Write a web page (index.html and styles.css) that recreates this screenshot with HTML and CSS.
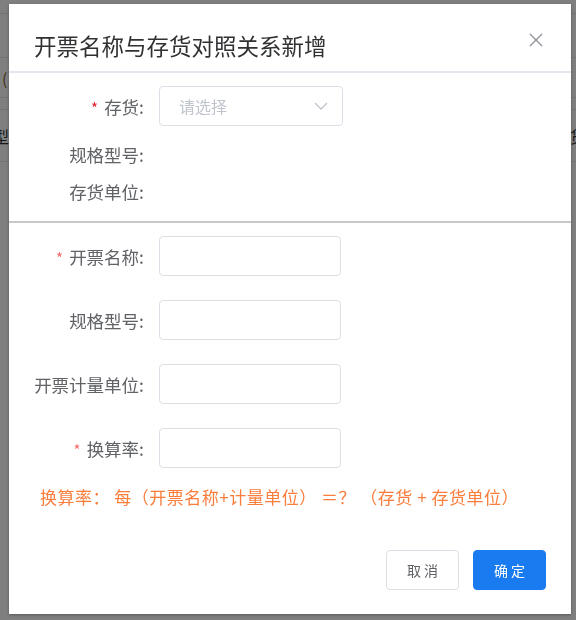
FILE: index.html
```html
<!DOCTYPE html>
<html lang="zh-CN">
<head>
    <meta charset="UTF-8">
    <title>开票名称与存货对照关系新增</title>
    <link rel="stylesheet" href="styles.css">
</head>
<body>

    <!-- страница под маской -->
    <div class="page">
        <div class="page-row h13"></div>
        <div class="page-row h44"></div>
        <div class="page-row h40"><span class="cell-left link">(</span></div>
        <div class="page-row h12"></div>
        <div class="page-row h52"><span class="cell-left">型</span><span class="cell-right">货</span></div>
    </div>

    <div class="mask">
        <div class="dialog">
            <div class="dialog-header">
                <span class="dialog-title">开票名称与存货对照关系新增</span>
                <button class="dialog-close" aria-label="关闭">
                    <svg width="14" height="14" viewBox="0 0 14 14">
                        <path d="M1 1L13 13M13 1L1 13" stroke="#909399" stroke-width="1.4" fill="none"/>
                    </svg>
                </button>
            </div>

            <div class="form-section section-top">
                <div class="form-item">
                    <label class="form-label"><i class="req dark">*</i>存货:</label>
                    <div class="select">
                        <span class="placeholder">请选择</span>
                        <svg class="arrow" width="14" height="8" viewBox="0 0 14 8">
                            <path d="M1 1L7 7L13 1" stroke="#c0c4cc" stroke-width="1.3" fill="none"/>
                        </svg>
                    </div>
                </div>
                <div class="form-item plain first-plain"><label class="form-label">规格型号:</label></div>
                <div class="form-item plain"><label class="form-label">存货单位:</label></div>
            </div>

            <div class="form-section section-bottom">
                <div class="form-item spaced">
                    <label class="form-label"><i class="req">*</i>开票名称:</label>
                    <input class="input" type="text">
                </div>
                <div class="form-item spaced">
                    <label class="form-label">规格型号:</label>
                    <input class="input" type="text">
                </div>
                <div class="form-item spaced">
                    <label class="form-label">开票计量单位:</label>
                    <input class="input" type="text">
                </div>
                <div class="form-item">
                    <label class="form-label"><i class="req">*</i>换算率:</label>
                    <input class="input" type="text">
                </div>
                <p class="tip">换算率： 每（开票名称+计量单位）&nbsp;＝？ （存货 + 存货单位）</p>
            </div>

            <div class="dialog-footer">
                <button class="btn">取 消</button>
                <button class="btn primary">确 定</button>
            </div>
        </div>
    </div>

</body>
</html>
```

FILE: styles.css
```css
html, body {
    margin: 0;
    padding: 0;
    height: 100%;
    width: 100%;
    overflow: hidden;
    font-family: "Noto Sans CJK SC", "Noto Sans", sans-serif;
    background-color: #fff;
}

.page {
    width: 100%;
}

.page-row {
    border-bottom: 1px solid #e6e6e6;
    display: flex;
    justify-content: space-between;
    align-items: center;
    font-size: 16px;
    color: #333;
    box-sizing: border-box;
}

.h13 { height: 14px; }
.h44 { height: 44px; }
.h40 { height: 40px; }
.h12 { height: 12px; }
.h52 { height: 52px; }

.cell-left {
    margin-left: -7px;
}

.cell-left.link {
    margin-left: 2px;
    color: #8a6a3a;
}

.cell-right {
    margin-right: -10px;
}

.mask {
    position: fixed;
    top: 0;
    left: 0;
    right: 0;
    bottom: 0;
    background: rgba(0, 0, 0, 0.5);
    padding: 4px 0 0 9px;
}

.dialog {
    width: 562px;
    height: 610px;
    background: #fff;
    box-shadow: 0 1px 3px rgba(0, 0, 0, 0.3);
    display: flex;
    flex-direction: column;
    box-sizing: border-box;
}

.dialog-header {
    height: 69px;
    box-sizing: border-box;
    padding: 28px 28px 0 25px;
    border-bottom: 2px solid #e4e7ed;
    display: flex;
    justify-content: space-between;
    align-items: flex-start;
}

.dialog-title {
    font-size: 22.5px;
    line-height: 26px;
    color: #303133;
}

.dialog-close {
    border: none;
    background: none;
    padding: 0;
    margin-top: 1px;
    width: 14px;
    height: 14px;
    cursor: pointer;
}

.dialog-close svg {
    display: block;
}

.form-section {
    display: flex;
    flex-direction: column;
}

.section-top {
    padding: 13px 0 11px;
    border-bottom: 2px solid #c8c8c8;
}

.section-bottom {
    padding-top: 13px;
}

.form-item {
    display: flex;
    align-items: center;
    gap: 15px;
    height: 40px;
}

.form-item.spaced {
    margin-bottom: 24px;
}

.form-item.plain {
    height: 37px;
}

.form-item.first-plain {
    margin-top: 10px;
}

.form-label {
    width: 135px;
    flex-shrink: 0;
    text-align: right;
    font-size: 17.5px;
    color: #606266;
}

.req {
    font-style: normal;
    color: #f56c6c;
    font-size: 15px;
    margin-right: 6px;
}

.req.dark {
    color: #e8222b;
}

.select {
    width: 184px;
    height: 40px;
    box-sizing: border-box;
    border: 1px solid #dcdfe6;
    border-radius: 4px;
    display: flex;
    align-items: center;
    justify-content: space-between;
    padding: 0 14px 0 19px;
}

.placeholder {
    font-size: 16px;
    color: #c0c4cc;
}

.input {
    width: 182px;
    height: 40px;
    box-sizing: border-box;
    border: 1px solid #dcdfe6;
    border-radius: 4px;
    margin: 0;
    padding: 0 12px;
    font-size: 16px;
    outline: none;
}

.tip {
    margin: 17px 0 0 31px;
    font-size: 17px;
    line-height: 24px;
    letter-spacing: 0.5px;
    color: #fa7d3c;
    white-space: nowrap;
}

.dialog-footer {
    margin-top: auto;
    padding: 0 25px 24px 0;
    display: flex;
    justify-content: flex-end;
    gap: 14px;
}

.btn {
    height: 40px;
    width: 73px;
    box-sizing: border-box;
    border: 1px solid #dcdfe6;
    border-radius: 4px;
    background: #fff;
    color: #606266;
    font-family: inherit;
    font-size: 14px;
    cursor: pointer;
}

.btn.primary {
    background: #1a7af0;
    border-color: #1a7af0;
    color: #fff;
}
```
